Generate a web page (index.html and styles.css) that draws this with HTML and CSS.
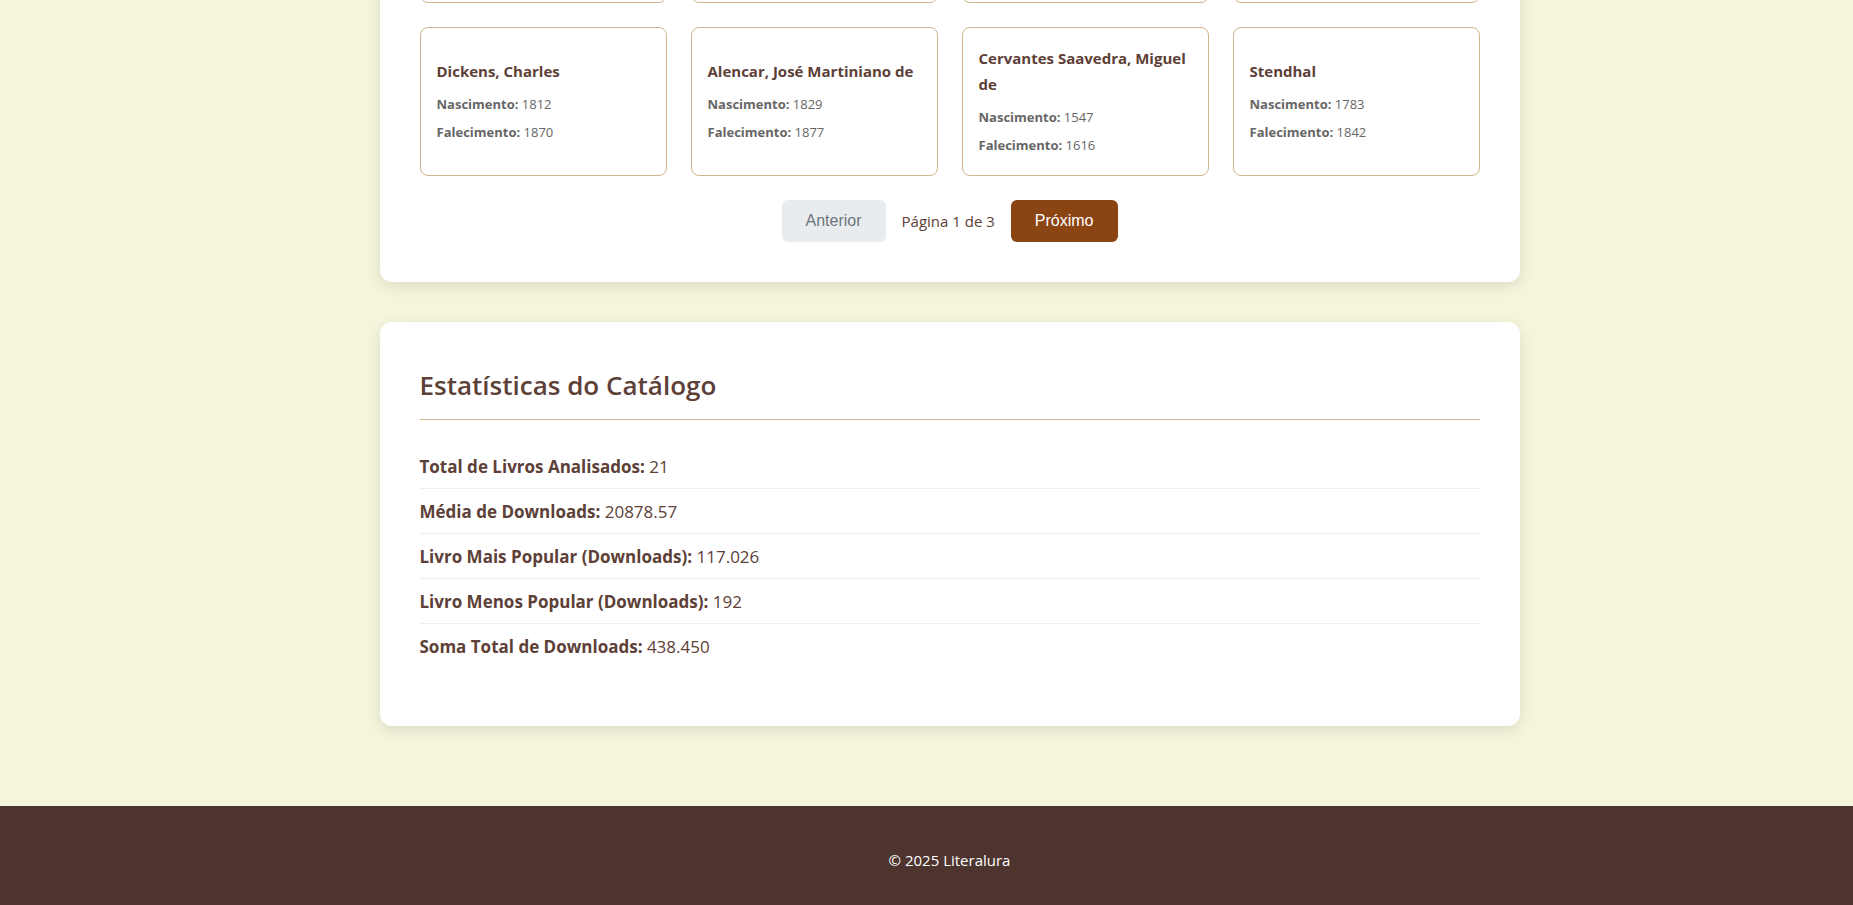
FILE: index.html
```html
<!DOCTYPE html>
<html lang="pt-BR">
<head>
<meta charset="utf-8">
<title>Literalura</title>
<meta name="viewport" content="width=device-width, initial-scale=1">
<link rel="stylesheet" href="styles.css">
</head>
<body>
<main class="content">
  <section class="panel panel-authors" aria-label="Autores">
    <div class="authors">
      <article class="author author-scrolled"></article>
      <article class="author author-scrolled"></article>
      <article class="author author-scrolled"></article>
      <article class="author author-scrolled"></article>
      <article class="author">
        <h3 class="author-name">Dickens, Charles</h3>
        <p class="author-fact"><strong>Nascimento:</strong> 1812</p>
        <p class="author-fact"><strong>Falecimento:</strong> 1870</p>
      </article>
      <article class="author">
        <h3 class="author-name">Alencar, José Martiniano de</h3>
        <p class="author-fact"><strong>Nascimento:</strong> 1829</p>
        <p class="author-fact"><strong>Falecimento:</strong> 1877</p>
      </article>
      <article class="author">
        <h3 class="author-name">Cervantes Saavedra, Miguel de</h3>
        <p class="author-fact"><strong>Nascimento:</strong> 1547</p>
        <p class="author-fact"><strong>Falecimento:</strong> 1616</p>
      </article>
      <article class="author">
        <h3 class="author-name">Stendhal</h3>
        <p class="author-fact"><strong>Nascimento:</strong> 1783</p>
        <p class="author-fact"><strong>Falecimento:</strong> 1842</p>
      </article>
    </div>
    <nav class="pager" aria-label="Paginação">
      <button class="pager-button" type="button" disabled>Anterior</button>
      <span class="pager-status">Página 1 de 3</span>
      <button class="pager-button" type="button">Próximo</button>
    </nav>
  </section>

  <section class="panel">
    <h2 class="panel-title">Estatísticas do Catálogo</h2>
    <ul class="stats">
      <li class="stat"><strong>Total de Livros Analisados:</strong> 21</li>
      <li class="stat"><strong>Média de Downloads:</strong> 20878.57</li>
      <li class="stat"><strong>Livro Mais Popular (Downloads):</strong> 117.026</li>
      <li class="stat"><strong>Livro Menos Popular (Downloads):</strong> 192</li>
      <li class="stat"><strong>Soma Total de Downloads:</strong> 438.450</li>
    </ul>
  </section>
</main>
<footer class="footer">
  <p class="footer-text">© 2025 Literalura</p>
</footer>
</body>
</html>
```
FILE: styles.css
```css
* {
  box-sizing: border-box;
}

body {
  --page-inset: 46px;
  display: flex;
  flex-direction: column;
  min-height: 100vh;
  margin: 0;
  background: #f5f5dc;
  color: #5d4037;
  font-family: "Segoe UI", "Open Sans", "Noto Sans", sans-serif;
  font-size: 15px;
  line-height: 26px;
}

.content {
  display: flex;
  flex-direction: column;
  align-items: center;
  gap: 40px;
  padding: 0 0 80px var(--page-inset);
}

.panel {
  width: 100%;
  max-width: 1140px;
  padding: 40px;
  border-radius: 12px;
  background: #fff;
  box-shadow: 0 4px 15px rgba(0, 0, 0, 0.1);
}

.panel-authors {
  margin-top: -61px;
}

.authors {
  display: grid;
  grid-template-columns: repeat(auto-fill, minmax(220px, 1fr));
  gap: 24px;
}

.author {
  display: flex;
  flex-direction: column;
  justify-content: center;
  padding: 17px 16px 16px;
  border: 1px solid #d2b48c;
  border-radius: 8px;
}

.author-scrolled {
  height: 24px;
  padding: 0;
}

.author-name {
  margin: 0 0 6px;
  font-size: 15px;
  font-weight: 700;
  line-height: 26px;
}

.author-fact {
  margin: 0;
  color: #666;
  font-size: 13px;
  line-height: 28px;
}

.pager {
  display: flex;
  justify-content: center;
  align-items: center;
  gap: 16px;
  margin-top: 24px;
}

.pager-button {
  padding: 12px 24px;
  border: 0;
  border-radius: 6px;
  background: #8b4513;
  color: #fff;
  font-family: Arial, "Liberation Sans", sans-serif;
  font-size: 16px;
  line-height: 18px;
  cursor: pointer;
}

.pager-button:disabled {
  background: #e9ecef;
  color: #6c757d;
  cursor: not-allowed;
}

.panel-title {
  margin: 0 0 24px;
  padding-bottom: 11px;
  border-bottom: 1px solid #d2b48c;
  font-size: 26px;
  font-weight: 600;
  line-height: 46px;
}

.stats {
  margin: 0 0 18px;
  padding: 0;
  list-style: none;
}

.stat {
  padding: 9px 0 7px;
  border-bottom: 1px solid #eee;
  font-size: 17px;
  line-height: 28px;
}

.stat:last-child {
  border-bottom: 0;
}

.footer {
  flex: 1;
  padding: 41px 0 32px var(--page-inset);
  background: #4e342e;
  color: #fff;
  text-align: center;
}

.footer-text {
  margin: 0;
}
```
